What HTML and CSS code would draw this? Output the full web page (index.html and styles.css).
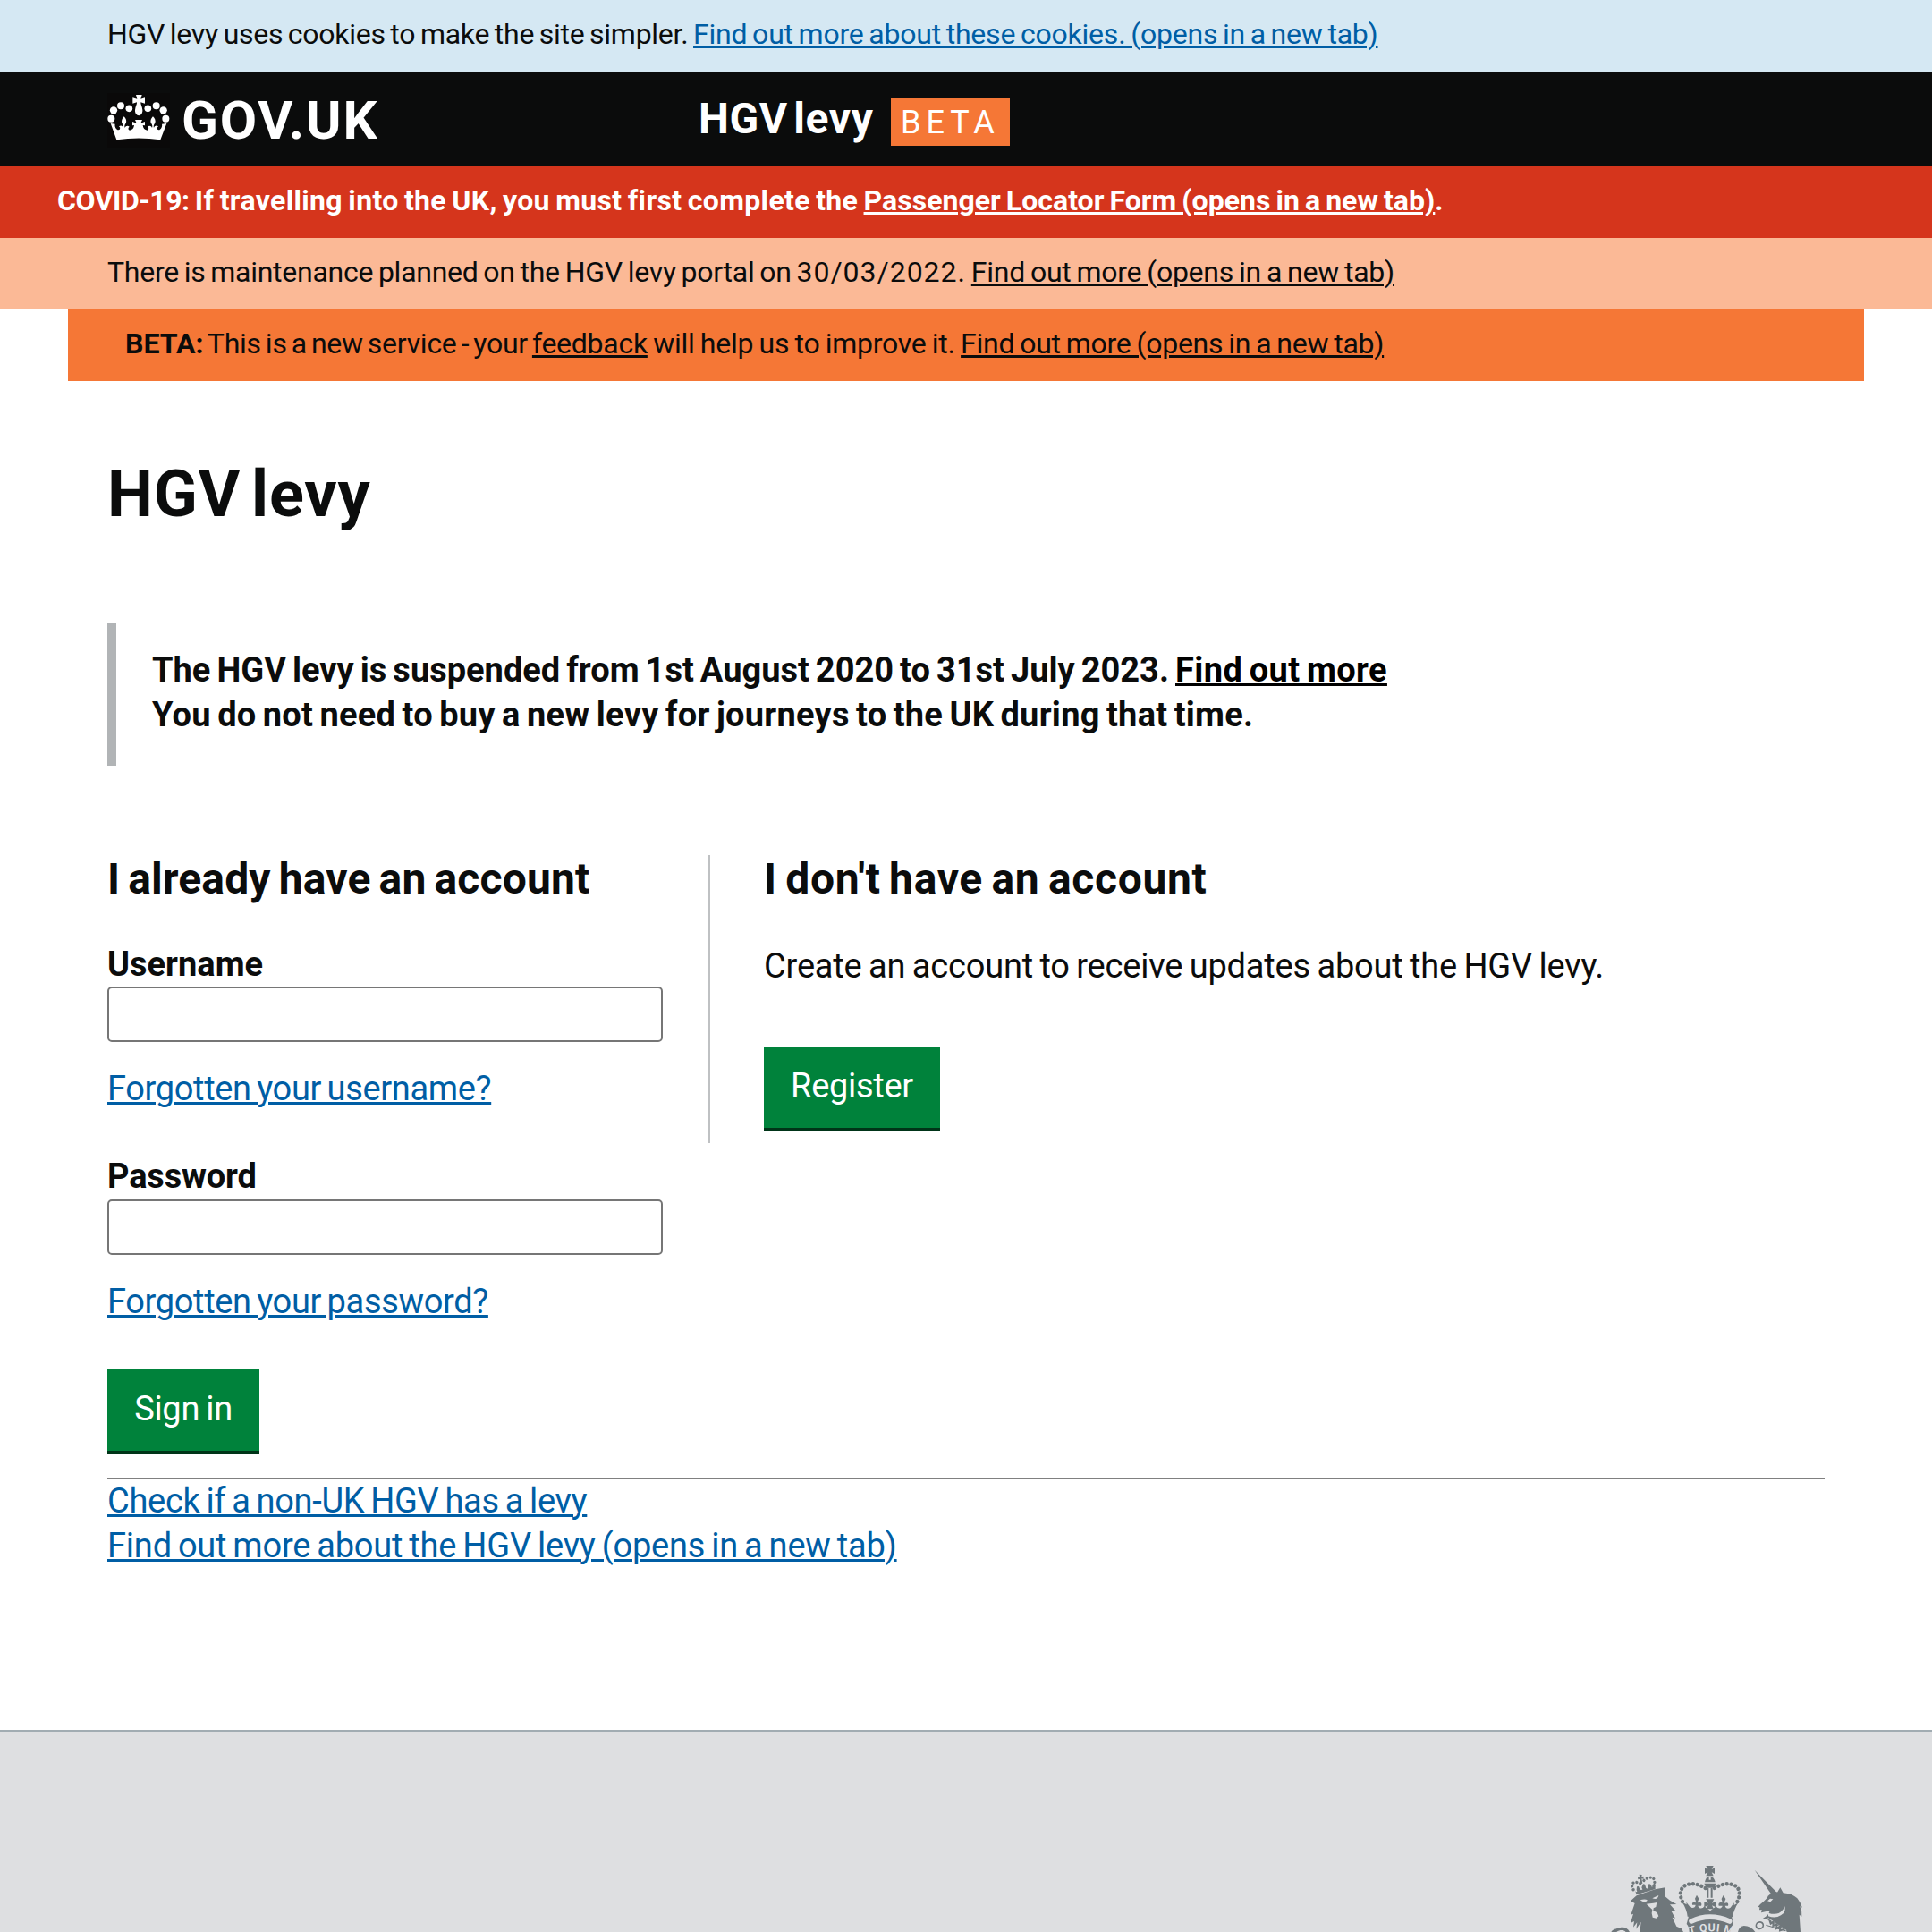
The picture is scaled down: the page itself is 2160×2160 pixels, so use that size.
FILE: index.html
```html
<!DOCTYPE html>
<html lang="en">
<head>
<meta charset="utf-8">
<title>HGV levy</title>
<link rel="stylesheet" href="styles.css">
</head>
<body>
<div class="bar bar-cookie"><p>HGV levy uses cookies to make the site simpler. <a class="link" href="#">Find out more about these cookies. (opens in a new tab)</a></p></div>
<header class="header">
  <a class="logo" href="#">
    <svg class="crown" viewBox="12 12 210 186" aria-hidden="true">
      <rect x="12" y="12" width="210" height="186" fill="#0a0909"/>
      <g fill="#fff">
        <path d="M108 18h20l-4 14 14-4v19l-14-4c-1 7 5 15 6 26 1 10-5 18-12 19-8-1-14-9-13-19 1-11 7-19 6-26l-14 4V28l15 4z"/>
        <circle cx="85" cy="64" r="11.500"/><circle cx="57" cy="55" r="12"/><circle cx="33" cy="70" r="12.500"/><circle cx="25" cy="98" r="12"/>
        <circle cx="148" cy="64" r="11.500"/><circle cx="176" cy="55" r="12"/><circle cx="200" cy="70" r="12.500"/><circle cx="208" cy="98" r="12"/>
        <path d="M43 169 23 114l15 2c-2 7 2 19 12 20 6-1 6-9 1-12 6-5 13-2 14 5 2-7 0-12-4-16-3-8 2-17 7-22 6 6 10 15 6 22-4 5-5 10-3 16 2-7 10-9 15-4-5 3-5 10 1 12 9-1 14-7 15-17l-6 1v-13l14 5-5-11h24l-5 11 14-5v13l-7-1c1 10 6 16 15 17 6-2 6-9 1-12 5-5 13-3 15 4 2-6 1-11-3-16-4-7 0-16 6-22 6 5 10 14 7 22-4 4-6 9-4 16 1-7 9-10 15-5-5 3-5 11 1 12 9-1 13-13 11-20l16-2-21 55q-73-11-146 0z"/>
      </g>
    </svg>
    <span class="logo-text">GOV.UK</span>
  </a>
  <span class="service">HGV levy</span>
  <span class="tag">BETA</span>
</header>
<div class="bar bar-alert"><p><span class="topic">COVID-19:</span> If travelling into the UK, you must first complete the <a class="link" href="#">Passenger Locator Form (opens in a new tab)</a>.</p></div>
<div class="bar bar-notice"><p>There is maintenance planned on the HGV levy portal on <span class="date">30/03/2022.</span> <a class="link" href="#">Find out more (opens in a new tab)</a></p></div>
<div class="bar bar-beta"><p><strong class="phase">BETA:</strong> This is a new service - your <a class="link" href="#">feedback</a><span class="help"> will help us to improve it. </span><a class="link" href="#">Find out more (opens in a new tab)</a></p></div>
<main class="main">
  <h1 class="title">HGV levy</h1>
  <div class="inset">
    <p>The HGV levy is suspended from 1st August 2020 to 31st July 2023. <a class="link" href="#">Find out more</a></p>
    <p class="inset-detail">You do not need to buy a new levy for journeys to the UK during that time.</p>
  </div>
  <div class="columns">
    <form class="signin">
      <h2 class="heading">I already have an account</h2>
      <label class="label" for="username">Username</label>
      <input class="input" id="username" type="text">
      <p class="forgot"><a class="link" href="#">Forgotten your username?</a></p>
      <label class="label label-second" for="password">Password</label>
      <input class="input input-second" id="password" type="password">
      <p class="forgot"><a class="link" href="#">Forgotten your password?</a></p>
      <button class="button button-signin" type="button">Sign in</button>
    </form>
    <section class="register">
      <h2 class="heading heading-register">I don't have an account</h2>
      <p class="create">Create an account to receive updates about the HGV levy.</p>
      <button class="button button-register" type="button">Register</button>
    </section>
  </div>
  <hr class="rule">
  <ul class="links">
    <li><a class="link" href="#">Check if a non-UK HGV has a levy</a></li>
    <li class="about"><a class="link" href="#">Find out more about the HGV levy (opens in a new tab)</a></li>
  </ul>
</main>
<footer class="footer">
  <svg class="crest" viewBox="0 0 780 300" aria-hidden="true">
    <g fill="#6f777b">
      <!-- lion -->
      <path d="M129 196l20-18 62-21 34-6-2 28 18 15 22 13-22 1 20 22-16-1 14 25-10-3 14 30 17 8 6 11H160l4-34-16 24 3-22-13 16 3-20-12 6 9-31-8 3 13-38z"/>
      <path d="M139 148l10 27 63-19-1-27-6 13-4 8-4-9-6-3-5 10 3 8-8-3-4-13-6-1-5 12 3 7-8 1-5-12-6 1-1 11 2 6-6 1-3-8z"/>
      <g fill="none" stroke="#6f777b" stroke-width="10" stroke-linecap="round" stroke-dasharray=".1 12">
        <path d="M138 158c-13-24 6-30 24-20M207 145c11-33-17-34-34-17"/>
      </g>
      <path d="M158 107l9 1-1 7 6-2 1 9-7-1 3 17-8-1-1-15-6 2-1-8 6-1z"/>
      <path d="M64 300c5-9 17-11 28-14 15-4 26 0 34 14h-13c-8-8-21-7-31 0z"/>
      <!-- central crown -->
      <path d="M382 78h25l-6 12 10-5v20l-10-5 6 12h-25l6-12-10 5V85l10 5zM378 133q4-19 14-20v12h6v-12q11 2 15 20zM376 137h40l-7 15h-26zM385 153h6v32h-6zM398 153h6v32h-6zM382 190h27l-7 13 13-5v19l-13-6 6 12h-25l6-12-13 6v-19l13 5z"/>
      <path d="M320 248c-1-16-8-33-18-48l15 8-1-8 13 17c9 5 18 0 18-8h-11c-2-9 5-11 11-7 3-6-2-11-2-14l6-12 7 12c-1 5-5 9-3 14 8-5 15 2 11 10h-11c3 10 15 12 21 2l20 15 20-15c7 10 19 8 21-2h-12c-3-8 3-14 11-10 2-6-2-9-2-13l6-12 8 12c-1 5-5 9-3 15 8-5 14 0 11 8h-10c2 9 10 12 18 6l12-16v8l14-8c-9 15-17 32-19 48q-75-20-131 0z"/>
      <path d="M324 247q69-27 144 0l6 27q-10 9-12 26H326q0-17-9-27z"/>
    </g>
    <g fill="none" stroke="#6f777b" stroke-width="13" stroke-linecap="round" stroke-dasharray=".1 14.500">
      <path d="M303 198c-13-27-6-51 17-57 20-6 38 0 60 12M487 198c14-27 7-51-17-57-20-6-38 0-60 12"/>
    </g>
    <path d="M333 264q61-29 128 0" fill="none" stroke="#dedfe1" stroke-width="17" stroke-linecap="round"/>
    <g fill="#dedfe1">
      <path d="M161 193q18-5 25 1-11 11-25-1zM202 187l21-10q-3 17-21 10zM182 206l24-3 11-2-3 15-8 4-1 8 13 7 5 12-8 7-12-3-3-14 2-12z"/>
    </g>
    <path id="motto-arc" d="M318 314Q399 282 482 314" fill="none"/>
    <text class="motto"><textPath href="#motto-arc" startOffset="50%">T QUI M</textPath></text>
    <!-- unicorn -->
    <g fill="#6f777b">
      <path d="M545 92l75 76-14 13zM622 166l9-15 10 18q30 2 47 18 12 15 17 31l-8-4q8 18 6 34l-8-6 4 58h-44l-54-38-28-8q19-9 22-23-8-2-14 1l-14 3 2-10-8 1 1-9-6-1 8-9q25-20 26-28 13-13 34-13z"/>
      <path d="M489 300q3-18 20-21 24 0 38 21z"/>
    </g>
    <path d="M588 196l9-8 10 2-9 9zM591 236q31 10 46-8 10-9 6-22 12 26-10 38-18 12-42 3z" fill="#dedfe1"/>
    <path d="M590 252l63 43h-70z" fill="#dedfe1"/>
    <path d="M587 256l61 36M583 277l65 19" fill="none" stroke="#6f777b" stroke-width="3"/>
    <path d="M595 260l4 12 9-6-1 13 13-5-2 14 13-6-1 13 13-4" fill="none" stroke="#6f777b" stroke-width="6"/>
    <ellipse cx="562" cy="278" rx="12" ry="11" fill="none" stroke="#6f777b" stroke-width="5" transform="rotate(-25 562 278)"/>
  </svg>
</footer>
</body>
</html>
```
FILE: styles.css
```css
* { box-sizing: border-box; }
body {
  margin: 0;
  background: #fff;
  color: #0b0c0c;
  font-family: Roboto, "Liberation Sans", sans-serif;
  font-size: 38px;
  line-height: 50px;
}
h1, h2, p, ul { margin: 0; padding: 0; }
.link {
  color: #005ea5;
  text-decoration: underline;
  text-decoration-thickness: 3px;
  text-underline-offset: 2px;
}
.bar {
  height: 80px;
  padding: 18px 120px 22px;
  font-size: 32px;
  line-height: 40px;
  letter-spacing: -0.27px;
  word-spacing: -2px;
  white-space: nowrap;
}
.bar-cookie { background: #d5e8f3; }
.bar-cookie .link { letter-spacing: -0.21px; }
.bar-alert {
  padding-left: 64px;
  background: #d5351c;
  color: #fff;
  font-weight: 700;
  letter-spacing: 0.35px;
}
.topic { letter-spacing: -0.5px; }
.bar-alert .link { color: #fff; letter-spacing: 0.04px; }
.bar-notice { background: #fbb996; word-spacing: -1.85px; }
.date { letter-spacing: 0.98px; }
.bar-beta { margin: 0 76px; padding-left: 64px; background: #f57736; word-spacing: -2.6px; }
.bar-notice .link, .bar-beta .link { color: #0b0c0c; word-spacing: -1.65px; }
.phase { letter-spacing: 0; }
.help { word-spacing: -1.3px; }

.header {
  display: flex;
  align-items: flex-start;
  height: 106px;
  padding-left: 120px;
  background: #0b0c0c;
  color: #fff;
}
.logo { display: flex; width: 661px; color: #fff; text-decoration: none; }
.crown { width: 70px; height: 62px; margin-top: 24px; }
.logo-text {
  margin-left: 13px;
  font-size: 60px;
  font-weight: 700;
  line-height: 109px;
  letter-spacing: 1.8px;
}
.service {
  width: 215px;
  font-size: 48px;
  font-weight: 700;
  line-height: 105px;
  letter-spacing: 0.6px;
  word-spacing: -6px;
  white-space: nowrap;
}
.tag {
  width: 133px;
  height: 53px;
  margin-top: 30px;
  padding-left: 11px;
  background: #f57736;
  font-size: 36px;
  line-height: 54px;
  letter-spacing: 6px;
}

.main { padding: 87px 120px 181px; }
.title { font-size: 72px; line-height: 80px; letter-spacing: 0.8px; word-spacing: -7px; }
.inset {
  height: 160px;
  margin-top: 103px;
  padding: 28px 0 0 40px;
  border-left: 10px solid #b1b4b6;
  font-weight: 700;
  word-spacing: -2.4px;
  white-space: nowrap;
}
.inset .link { color: #000; letter-spacing: 0.4px; }
.inset-detail { letter-spacing: 0.26px; }
.columns { display: grid; grid-template-columns: 672px 1fr; align-items: start; margin-top: 100px; }
.heading {
  padding-top: 2px;
  font-size: 48px;
  line-height: 50px;
  letter-spacing: 0.15px;
  word-spacing: -3px;
}
.heading-register { letter-spacing: 0.66px; }
.label { display: block; margin-top: 45px; font-weight: 700; }
.label-second { margin-top: 48px; letter-spacing: -0.15px; }
.input {
  display: block;
  width: 621px;
  height: 62px;
  margin: 0;
  border: 2px solid #767676;
  border-radius: 5px;
  background: #fff;
}
.input-second { margin-top: 1px; }
.forgot { margin-top: 27px; letter-spacing: -0.34px; word-spacing: -2.6px; }
.button {
  display: block;
  height: 95px;
  padding: 0 0 3px;
  border: 0;
  border-bottom: 4px solid #003418;
  background: #00823b;
  color: #fff;
  font: inherit;
  line-height: 88px;
  letter-spacing: -0.3px;
  word-spacing: -2px;
}
.button-signin { width: 170px; margin-top: 51px; }
.button-register { width: 197px; margin-top: 65px; }
.register { padding: 0 0 13px 60px; border-left: 2px solid #bfc1c3; }
.create { margin-top: 47px; letter-spacing: -0.19px; word-spacing: -1.75px; }
.rule { height: 2px; margin: 26px 0 0; border: 0; background: #808080; }
.links { margin-top: -1px; list-style: none; letter-spacing: -0.3px; word-spacing: -2.2px; }
.about { letter-spacing: -0.2px; }

.footer {
  display: flex;
  justify-content: flex-end;
  height: 226px;
  padding: 124px 120px 0 0;
  border-top: 2px solid #a1acb2;
  background: #dedfe1;
}
.crest { width: 260px; height: 100px; }
.motto {
  fill: #dedfe1;
  font-size: 37px;
  font-weight: 700;
  letter-spacing: 2px;
  text-anchor: middle;
}
```
